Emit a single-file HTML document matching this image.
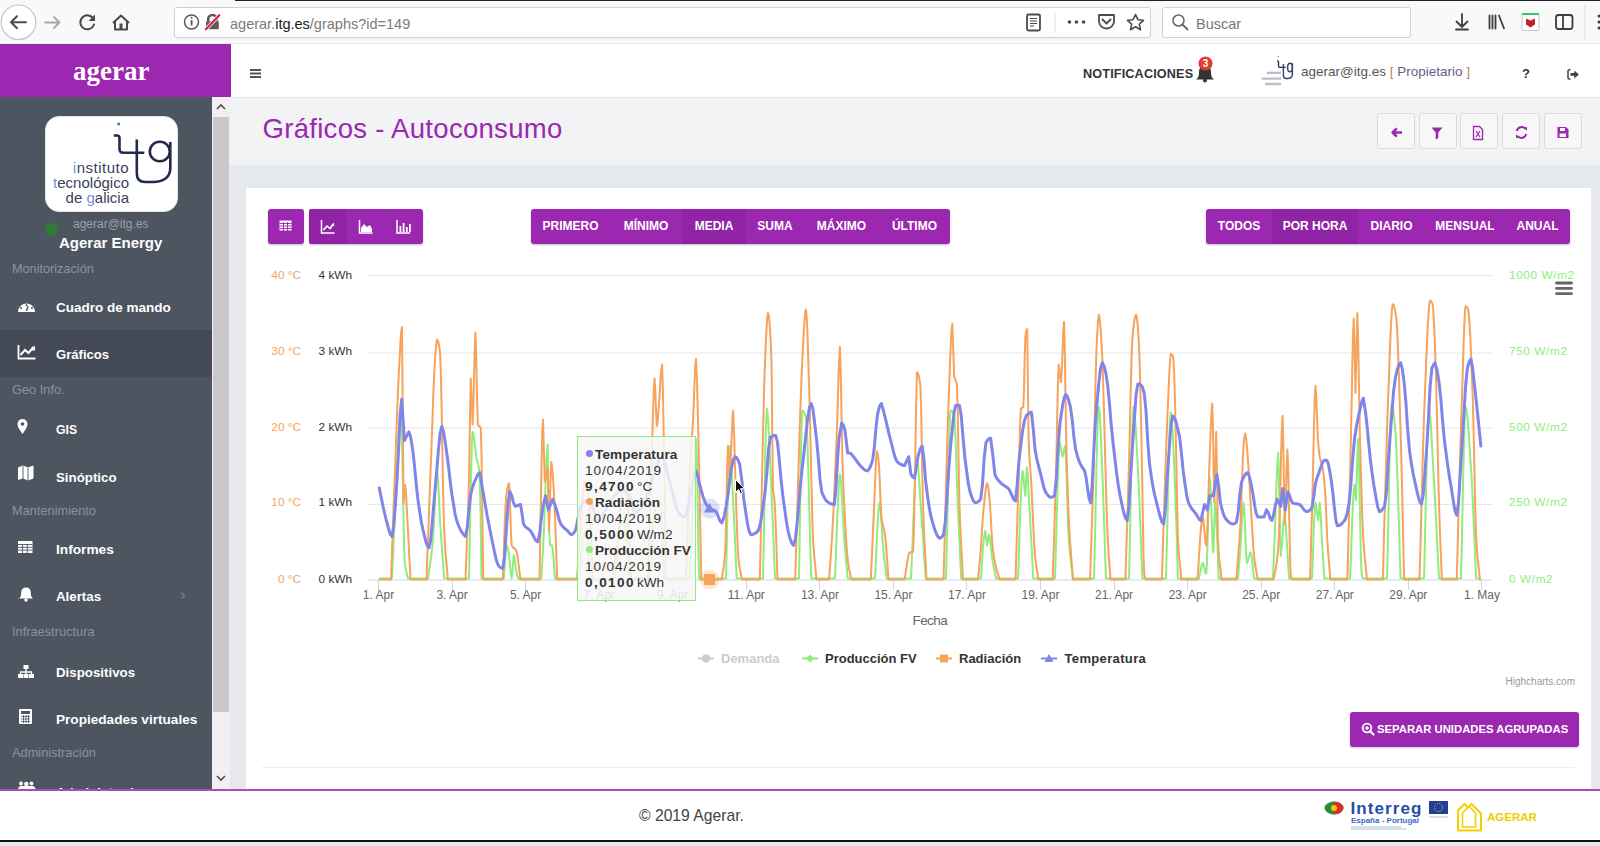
<!DOCTYPE html>
<html><head><meta charset="utf-8">
<style>
*{box-sizing:border-box;margin:0;padding:0}
html,body{width:1600px;height:846px;overflow:hidden;background:#fff;font-family:"Liberation Sans",sans-serif}
.a{position:absolute}
.t{position:absolute;white-space:nowrap;line-height:1}
#chrome{left:0;top:0;width:1600px;height:44px;background:#f9f9fa;border-bottom:1px solid #ececee}
#topline{left:235px;top:0;width:1365px;height:1px;background:#1f1f3a}
.url{left:174px;top:7px;width:977px;height:31px;background:#fff;border:1px solid #d2d2d6;border-radius:3px;box-shadow:0 1px 1px rgba(0,0,0,.05)}
.search{left:1162px;top:7px;width:249px;height:31px;background:#fff;border:1px solid #d2d2d6;border-radius:3px}
#hdrL{left:0;top:44px;width:231px;height:53px;background:#9c27b0}
#hdrR{left:231px;top:44px;width:1369px;height:54px;background:#fff;border-bottom:1px solid #e3e6ea}
#side{left:0;top:97px;width:212px;height:692px;background:#4d5561}
#sbar{left:212px;top:97px;width:18px;height:692px;background:#f0f0f0}
#thumb{left:213px;top:117px;width:16px;height:595px;background:#c9c9c9}
#content{left:230px;top:98px;width:1370px;height:691px;background:#e5e9ed}
#phead{left:230px;top:98px;width:1370px;height:67px;background:#f2f3f5}
#card{left:246px;top:188px;width:1345px;height:620px;background:#fff}
#footer{left:0;top:789px;width:1600px;height:51px;background:#fff;border-top:2px solid #a64dbb}
#botline{left:0;top:840px;width:1600px;height:2px;background:#111}
#botgray{left:0;top:842px;width:1600px;height:4px;background:#e8e8e8}
.bg{position:absolute;background:#9c27b0;border-radius:3px;box-shadow:0 1px 2px rgba(0,0,0,.25)}
.bt{position:absolute;top:0;height:35px;color:#fff;font-weight:bold;font-size:12px;line-height:35px;text-align:center;white-space:nowrap}
.act{background:#9124a6}
.si{position:absolute;left:56px;color:#fff;font-weight:bold;font-size:13.3px;white-space:nowrap;line-height:1}
.ss{position:absolute;left:12px;color:#8793a5;font-size:12.8px;white-space:nowrap;line-height:1}
.hb{position:absolute;top:113px;width:38px;height:36px;background:#f7f7f7;border:1px solid #dcdcdc;border-radius:3px}
</style></head><body>
<div class="a" id="chrome"></div>
<div class="a" id="topline"></div>
<div class="a url"></div>
<div class="a search"></div>

<!-- browser icons -->
<svg class="a" style="left:0;top:0" width="1600" height="44">
  <circle cx="18.5" cy="22.3" r="17.3" fill="#fff" stroke="#c4c4c8" stroke-width="1.2"/>
  <g stroke="#4a4a4f" stroke-width="2" fill="none" stroke-linecap="round" stroke-linejoin="round">
    <path d="M11 22.3h15M17 16.3l-6 6 6 6"/>
  </g>
  <g stroke="#a8a8ab" stroke-width="1.8" fill="none" stroke-linecap="round" stroke-linejoin="round">
    <path d="M45 22.5h14M54 17l5.5 5.5-5.5 5.5"/>
  </g>
  <g stroke="#4a4a4f" stroke-width="2" fill="none" stroke-linecap="round">
    <path d="M93.5 19a7 7 0 1 0 0.5 5.5"/>
  </g>
  <path d="M95 14.5v6.5h-6.5z" fill="#4a4a4f"/>
  <path d="M113 23l8-7.5 8 7.5M115 21.5v8h12v-8" stroke="#4a4a4f" stroke-width="2" fill="none" stroke-linejoin="round"/>
  <rect x="119.5" y="23.5" width="3" height="6" fill="#4a4a4f"/>
  <!-- info -->
  <circle cx="191.5" cy="22" r="7" fill="none" stroke="#5a5a5e" stroke-width="1.5"/>
  <rect x="190.7" y="20" width="1.8" height="5.5" fill="#5a5a5e"/><circle cx="191.6" cy="17.8" r="1" fill="#5a5a5e"/>
  <!-- lock -->
  <path d="M208.2 21.5v-2.2a4.3 4.3 0 0 1 8.6 0v2.2" stroke="#5a5a5e" stroke-width="2.6" fill="none"/>
  <rect x="206" y="21.2" width="12.8" height="8" rx="1.2" fill="#5a5a5e"/>
  <path d="M205.8 29.2l13.5-14" stroke="#fff" stroke-width="3.6" stroke-linecap="round"/>
  <path d="M205.8 29.2l13.5-14" stroke="#e2203e" stroke-width="2.2" stroke-linecap="round"/>
  <!-- reader -->
  <rect x="1027" y="14.5" width="13" height="16" rx="1.5" fill="none" stroke="#4a4a4f" stroke-width="1.8"/>
  <path d="M1030 18.5h7M1030 21h7M1030 23.5h7M1030 26h4" stroke="#4a4a4f" stroke-width="1"/>
  <rect x="1054.5" y="12" width="1" height="21" fill="#e0e0e2"/>
  <circle cx="1069.5" cy="22" r="1.8" fill="#4a4a4f"/><circle cx="1076.5" cy="22" r="1.8" fill="#4a4a4f"/><circle cx="1083.5" cy="22" r="1.8" fill="#4a4a4f"/>
  <path d="M1099 15h15v6a7.5 7.5 0 0 1-15 0z" fill="none" stroke="#4a4a4f" stroke-width="1.8" stroke-linejoin="round"/>
  <path d="M1102.5 19.5l4 4 4-4" fill="none" stroke="#4a4a4f" stroke-width="1.8" stroke-linecap="round"/>
  <path d="M1135.5 14.5l2.4 5.2 5.6.6-4.2 3.8 1.2 5.6-5-2.9-5 2.9 1.2-5.6-4.2-3.8 5.6-.6z" fill="none" stroke="#4a4a4f" stroke-width="1.6" stroke-linejoin="round"/>
  <!-- search icon -->
  <circle cx="1178.5" cy="20.5" r="5.5" fill="none" stroke="#6a6a6e" stroke-width="1.6"/>
  <path d="M1182.5 24.5l5 5" stroke="#6a6a6e" stroke-width="1.8" stroke-linecap="round"/>
  <!-- download -->
  <path d="M1462 14v13M1456.5 21.5l5.5 5.5 5.5-5.5M1456 29.5h12" stroke="#3d3d42" stroke-width="1.8" fill="none" stroke-linecap="round"/>
  <!-- library -->
  <path d="M1489.5 15.5v13M1492.5 15.5v13M1495.5 15.5v13M1499 15.5l5 13" stroke="#3d3d42" stroke-width="1.8" stroke-linecap="round"/>
  <!-- mcafee -->
  <rect x="1522" y="13.5" width="17" height="17" rx="1" fill="#fff" stroke="#c8c8c8"/>
  <rect x="1522" y="13" width="17" height="2" fill="#3ac46b"/>
  <path d="M1526 18.5l4.5 2 4.5-2v6l-4.5 3-4.5-3z" fill="#c8202f"/>
  <!-- sidebar -->
  <rect x="1556" y="15" width="16.5" height="14" rx="2.5" fill="none" stroke="#3d3d42" stroke-width="1.8"/>
  <path d="M1563 15v14" stroke="#3d3d42" stroke-width="1.8"/>
  <rect x="1584.5" y="5" width="1" height="34" fill="#e0e0e2"/>
  <circle cx="1599" cy="16" r="1.5" fill="#3d3d42"/><circle cx="1599" cy="22" r="1.5" fill="#3d3d42"/><circle cx="1599" cy="28" r="1.5" fill="#3d3d42"/>
</svg>
<div class="t" style="left:230px;top:16.5px;font-size:14.5px;color:#7a7a7e">agerar.<span style="color:#1a1a1e">itg.es</span>/graphs?id=149</div>
<div class="t" style="left:1196px;top:17px;font-size:14.5px;color:#77777b">Buscar</div>

<div class="a" id="hdrL"></div>
<div class="t" style="left:73px;top:57.7px;font-family:'Liberation Serif',serif;font-weight:bold;font-size:27px;color:#fff">agerar</div>
<div class="a" id="hdrR"></div>
<svg class="a" style="left:250px;top:68px" width="12" height="11"><rect y="1" width="11" height="2" fill="#555"/><rect y="4.5" width="11" height="2" fill="#555"/><rect y="8" width="11" height="2" fill="#555"/></svg>

<!-- header right -->
<div class="t" style="left:1083px;top:68px;font-size:12.65px;letter-spacing:0.15px;font-weight:bold;color:#333">NOTIFICACIONES</div>
<svg class="a" style="left:1194px;top:55px" width="22" height="28">
  <path d="M2 24.5c2-1.5 3-3 3-7.5 0-4 2.5-6.5 6-6.5s6 2.5 6 6.5c0 4.5 1 6 3 7.5z" fill="#333"/>
  <circle cx="11" cy="25.5" r="2" fill="#333"/>
  <circle cx="11.5" cy="8.5" r="7" fill="#e53935"/>
  <text x="11.5" y="12.2" font-size="10" font-weight="bold" fill="#fff" text-anchor="middle" font-family="Liberation Sans">3</text>
</svg>
<svg class="a" style="left:1255px;top:52px" width="45" height="40">
  <rect x="22.7" y="4" width="1" height="1" fill="#4a5a90"/>
  <path d="M22 8.9h0.8c0.5 0 0.7 0.3 0.7 0.8v4.6c0 0.7 0.4 1.1 1.1 1.1h6.1" stroke="#2b2f5a" stroke-width="1.4" fill="none"/>
  <path d="M28.4 12v11.5c0 2 1 3 3 3h1.5c2.8 0 4.5-1.8 4.5-4.5V11.3" stroke="#3a3f6a" stroke-width="1.4" fill="none"/>
  <ellipse cx="35" cy="15.5" rx="2.4" ry="4.3" stroke="#3a3f6a" stroke-width="1.4" fill="none"/>
  <path d="M12 20.8h14M6.6 26.6h19.4M10.2 32h15.8" stroke="#8f92a8" stroke-width="2.3" opacity=".6"/>
</svg>
<div class="t" style="left:1301px;top:65px;font-size:13.5px;color:#555">agerar@itg.es <span style="color:#b08a4a">[</span> <span style="color:#6a5a8a">Propietario</span> <span style="color:#b08a4a">]</span></div>
<div class="t" style="left:1522px;top:67px;font-size:13px;font-weight:bold;color:#333">?</div>
<svg class="a" style="left:1565px;top:66px" width="16" height="14">
  <path d="M5.5 3.8H4.2c-.8 0-1.2.5-1.2 1.2v6.8c0 .7.4 1.2 1.2 1.2h1.3" stroke="#444" stroke-width="1.5" fill="none"/>
  <path d="M5.5 7h3.8V4.4l4.6 4-4.6 4V9.8H5.5z" fill="#444"/>
</svg>

<div class="a" id="content"></div>
<div class="a" id="phead"></div>
<div class="t" style="left:262.5px;top:115px;font-size:27.5px;letter-spacing:0.3px;color:#9c27b0">Gráficos - Autoconsumo</div>
<div class="hb" style="left:1377px"></div>
<div class="hb" style="left:1419px"></div>
<div class="hb" style="left:1460px"></div>
<div class="hb" style="left:1502px"></div>
<div class="hb" style="left:1544px"></div>
<svg class="a" style="left:1377px;top:113px" width="206" height="36">
  <path d="M16 19.5h9M19.8 15.3l-4.2 4.2 4.2 4.2" stroke="#9c27b0" stroke-width="2.5" fill="none" stroke-linejoin="round"/>
  <path d="M54.5 14.5h11l-4.2 5v5.5l-2.6 1.5v-7z" fill="#9c27b0"/>
  <path d="M96.5 13.5h6l3 3v10h-9z" stroke="#9c27b0" stroke-width="1.3" fill="none"/>
  <path d="M99 18l4 6M103 18l-4 6" stroke="#9c27b0" stroke-width="1.2"/>
  <path d="M139.8 18a5 5 0 0 1 8.6-2.2M149.2 21a5 5 0 0 1-8.6 2.2" stroke="#9c27b0" stroke-width="2" fill="none"/>
  <path d="M146.5 14.5l3.5-0.5 0 3.8zM142.5 24.5l-3.5 0.5 0-3.8z" fill="#9c27b0"/>
  <path d="M180.5 14h8.5l2.5 2.5v8.5h-11z" fill="#9c27b0"/>
  <rect x="183" y="15" width="5" height="3" fill="#f7f7f7"/><rect x="182.5" y="20.5" width="6.5" height="3.5" fill="#f7f7f7"/>
</svg>

<div class="a" id="card"></div>
<!-- card buttons -->
<div class="bg" style="left:268px;top:209px;width:36px;height:35px"></div>
<svg class="a" style="left:279px;top:220px" width="14" height="12"><rect x=".5" y=".5" width="12" height="10" fill="#fff"/><path d="M0.5 3.5h12M.5 6h12M.5 8.5h12M4.5 2v9M8.5 2v9" stroke="#9c27b0" stroke-width=".9"/></svg>
<div class="bg" style="left:309px;top:209px;width:114px;height:35px;overflow:hidden"><div class="a act" style="left:0;top:0;width:38px;height:35px"></div></div>
<svg class="a" style="left:309px;top:209px" width="114" height="35">
  <path d="M12.5 11v13h13" stroke="#fff" stroke-width="1.5" fill="none"/>
  <path d="M14.5 21l3.5-4 3 2.5 3.5-4.5" stroke="#fff" stroke-width="1.6" fill="none"/>
  <path d="M25 13.5v3.5h-3.5z" fill="#fff"/>
  <path d="M50.5 11v13h13" stroke="#fff" stroke-width="1.5" fill="none"/>
  <path d="M52 23v-4l3-4 3 3 3-2 2 4v3z" fill="#fff"/>
  <path d="M88 11v13h13" stroke="#fff" stroke-width="1.5" fill="none"/>
  <path d="M90.5 17h1.8v6h-1.8zM93.7 14h1.8v9h-1.8zM96.9 18h1.8v5h-1.8zM100 15h1.8v8H100z" fill="#fff"/>
</svg>
<div class="bg" style="left:531px;top:209px;width:419px;height:35px">
  <div class="bt" style="left:0;width:79px">PRIMERO</div>
  <div class="bt" style="left:79px;width:72px">MÍNIMO</div>
  <div class="bt act" style="left:151px;width:64px">MEDIA</div>
  <div class="bt" style="left:215px;width:58px">SUMA</div>
  <div class="bt" style="left:273px;width:75px">MÁXIMO</div>
  <div class="bt" style="left:348px;width:71px">ÚLTIMO</div>
</div>
<div class="bg" style="left:1206px;top:209px;width:364px;height:35px">
  <div class="bt" style="left:0;width:66px">TODOS</div>
  <div class="bt act" style="left:66px;width:86px">POR HORA</div>
  <div class="bt" style="left:152px;width:67px">DIARIO</div>
  <div class="bt" style="left:219px;width:80px">MENSUAL</div>
  <div class="bt" style="left:299px;width:65px">ANUAL</div>
</div>
<!-- CHART -->
<svg class="a" style="left:0;top:0" width="1600" height="790" font-family="Liberation Sans">
  <g stroke="#e6e6e6" stroke-width="1">
    <path d="M368 275.5H1492M368 353H1492M368 428H1492M368 504.5H1492"/>
  </g>
  <path d="M368 580H1492" stroke="#ccd6eb" stroke-width="1"/>
  <g stroke="#ccd6eb" stroke-width="1">
    <path d="M378.5 580V590M452.5 580V590M525.5 580V590M599.5 580V590M672.5 580V590M746.5 580V590M819.5 580V590M893.5 580V590M966.5 580V590M1040.5 580V590M1114.5 580V590M1187.5 580V590M1261.5 580V590M1334.5 580V590M1408.5 580V590M1481.5 580V590"/>
  </g>
  <g font-size="11.8" fill="#f7a35c" text-anchor="end">
    <text x="301" y="279">40 °C</text><text x="301" y="355">30 °C</text><text x="301" y="431">20 °C</text><text x="301" y="506.3">10 °C</text><text x="301" y="582.5">0 °C</text>
  </g>
  <g font-size="11.8" fill="#333" text-anchor="end">
    <text x="352" y="279">4 kWh</text><text x="352" y="355">3 kWh</text><text x="352" y="431">2 kWh</text><text x="352" y="506.3">1 kWh</text><text x="352" y="582.5">0 kWh</text>
  </g>
  <g font-size="11.8" fill="#90ed7d" text-anchor="start" letter-spacing="0.6">
    <text x="1509" y="279">1000 W/m2</text><text x="1509" y="355">750 W/m2</text><text x="1509" y="431">500 W/m2</text><text x="1509" y="506.3">250 W/m2</text><text x="1509" y="582.5">0 W/m2</text>
  </g>
  <g font-size="12" fill="#666" text-anchor="middle">
    <text x="378.5" y="599">1. Apr</text><text x="452.1" y="599">3. Apr</text><text x="525.6" y="599">5. Apr</text><text x="599.2" y="599">7. Apr</text><text x="672.7" y="599">9. Apr</text><text x="746.3" y="599">11. Apr</text><text x="819.9" y="599">13. Apr</text><text x="893.4" y="599">15. Apr</text><text x="967.0" y="599">17. Apr</text><text x="1040.5" y="599">19. Apr</text><text x="1114.1" y="599">21. Apr</text><text x="1187.7" y="599">23. Apr</text><text x="1261.2" y="599">25. Apr</text><text x="1334.8" y="599">27. Apr</text><text x="1408.3" y="599">29. Apr</text><text x="1481.9" y="599">1. May</text>
  </g>
  <text x="929.8" y="624.5" font-size="13.5" letter-spacing="-0.6" fill="#666" text-anchor="middle">Fecha</text>
  <path d="M1556.5 283h15M1556.5 288.3h15M1556.5 293.6h15" stroke="#666" stroke-width="2.8" stroke-linecap="round"/>
  <path d="M379.0,578.5 L392.0,578.5 L392.7,562.7 L393.4,546.4 L394.1,530.0 L394.9,513.9 L395.6,498.3 L396.3,483.5 L397.0,470.0 L397.7,455.9 L398.4,441.0 L399.2,427.5 L399.9,417.8 L400.6,414.0 L402.0,440.0 L402.8,478.6 L403.7,529.5 L404.5,559.5 L405.2,565.4 L405.9,569.5 L406.6,572.5 L407.3,575.2 L408.0,578.5 L428.0,578.5 L428.7,573.3 L429.4,568.4 L430.1,563.6 L430.9,558.6 L431.6,553.2 L432.3,547.1 L433.0,540.0 L433.8,527.2 L434.6,509.4 L435.5,491.0 L436.3,476.7 L437.1,470.9 L437.8,476.5 L438.6,489.9 L439.3,506.1 L440.0,520.0 L440.8,532.5 L441.7,544.3 L442.5,555.7 L443.4,567.0 L444.2,578.5 L469.0,578.5 L469.7,544.5 L470.4,505.7 L471.2,469.4 L471.9,442.4 L472.6,431.8 L473.3,433.7 L474.0,438.5 L474.8,444.9 L475.5,451.4 L476.2,456.7 L476.9,460.0 L477.6,462.4 L478.3,465.0 L479.0,468.6 L479.7,474.4 L480.6,515.7 L481.5,578.5 L504.0,578.5 L504.8,564.9 L505.5,551.2 L506.3,545.0 L507.0,545.9 L507.7,548.2 L508.4,551.4 L509.1,555.0 L509.9,563.0 L510.8,573.4 L511.6,578.5 L512.4,572.4 L513.2,561.1 L514.0,555.0 L515.0,561.1 L516.0,570.0 L517.0,574.5 L518.0,578.5 L541.3,578.5 L542.0,566.0 L542.8,553.5 L543.5,540.0 L544.2,523.4 L544.9,503.0 L545.6,481.9 L546.3,463.0 L547.0,449.5 L547.7,444.3 L548.4,500.0 L549.2,531.3 L550.0,545.0 L551.0,545.2 L551.9,545.3 L552.7,549.1 L553.5,557.9 L554.2,568.7 L555.0,578.5 L579.0,578.5 L579.8,570.2 L580.6,561.3 L581.4,552.6 L582.2,545.3 L583.0,540.0 L583.8,536.4 L584.5,533.2 L585.2,530.9 L586.0,530.0 L586.8,533.5 L587.6,542.4 L588.4,554.4 L589.2,567.2 L590.0,578.5 L615.0,578.5 L615.7,571.1 L616.4,562.9 L617.1,554.7 L617.9,546.7 L618.6,539.6 L619.3,533.9 L620.0,530.0 L620.8,527.0 L621.6,524.2 L622.4,522.0 L623.2,520.5 L624.0,520.0 L624.7,522.2 L625.4,528.2 L626.1,536.9 L626.9,547.3 L627.6,558.4 L628.3,569.1 L629.0,578.5 L650.0,578.5 L650.7,567.8 L651.4,556.0 L652.1,543.8 L652.9,532.2 L653.6,522.1 L654.3,514.4 L655.0,510.0 L655.7,507.6 L656.4,505.5 L657.1,503.6 L657.9,502.1 L658.6,501.0 L659.3,500.2 L660.0,500.0 L660.8,505.7 L661.6,520.1 L662.4,539.6 L663.2,560.3 L664.0,578.5 L690.0,578.5 L690.8,555.8 L691.6,532.0 L692.4,508.8 L693.2,487.6 L694.0,470.0 L695.0,449.7 L696.0,439.0 L696.8,454.3 L697.5,491.3 L698.2,537.1 L699.0,578.5 L726.0,578.5 L726.7,547.8 L727.4,512.8 L728.2,479.9 L728.9,455.5 L729.6,446.0 L730.3,449.8 L731.0,459.7 L731.8,473.3 L732.5,488.5 L733.2,502.8 L733.9,516.4 L734.6,531.4 L735.3,547.1 L736.0,563.0 L736.7,578.5 L763.0,578.5 L763.8,539.1 L764.6,494.3 L765.3,452.2 L766.1,421.0 L766.9,408.8 L767.6,412.7 L768.3,422.8 L769.0,436.8 L769.7,452.4 L770.4,467.3 L771.2,483.4 L771.9,501.3 L772.7,520.3 L773.5,539.9 L774.2,559.5 L775.0,578.5 L799.0,578.5 L799.8,528.7 L800.6,473.6 L801.5,429.0 L802.3,410.6 L803.0,410.9 L803.7,411.8 L804.5,413.1 L805.2,414.9 L805.9,417.0 L806.7,424.9 L807.4,442.1 L808.2,466.0 L808.9,494.1 L809.7,523.9 L810.4,552.9 L811.2,578.5 L835.0,578.5 L835.8,558.7 L836.6,536.1 L837.5,513.4 L838.3,493.7 L839.1,479.7 L839.9,474.4 L840.6,477.8 L841.3,486.8 L842.0,499.2 L842.8,513.3 L843.5,526.9 L844.2,538.0 L844.9,546.7 L845.6,554.9 L846.3,562.8 L847.0,570.6 L847.7,578.5 L875.0,578.5 L875.8,564.1 L876.5,547.7 L877.3,531.2 L878.1,516.8 L878.8,506.7 L879.6,502.8 L880.3,506.4 L881.0,515.5 L881.8,527.4 L882.5,539.4 L883.2,548.9 L883.9,555.6 L884.6,561.6 L885.3,567.2 L886.0,572.8 L886.7,578.5 L911.0,578.5 L911.7,562.1 L912.5,543.4 L913.2,523.7 L914.0,504.6 L914.7,487.2 L915.4,473.1 L916.2,463.7 L916.9,460.2 L917.7,463.0 L918.4,470.4 L919.2,480.9 L920.0,493.1 L920.7,505.7 L921.5,517.0 L922.2,526.7 L922.9,536.7 L923.6,547.1 L924.3,557.6 L925.0,568.1 L925.7,578.5 L946.0,578.5 L946.8,546.6 L947.5,510.1 L948.3,473.6 L949.1,441.7 L949.8,419.2 L950.6,410.6 L951.3,410.7 L952.0,411.2 L952.7,411.9 L953.4,412.9 L954.1,414.1 L954.8,421.6 L955.5,438.4 L956.3,460.3 L957.0,483.2 L957.7,502.8 L958.4,518.6 L959.1,533.8 L959.8,548.7 L960.5,563.5 L961.2,578.5 L981.0,578.5 L981.8,565.1 L982.7,551.7 L983.5,541.8 L984.4,534.5 L985.3,531.0 L986.2,538.1 L987.1,545.3 L988.0,540.0 L988.9,534.7 L989.6,536.6 L990.3,541.4 L991.0,547.7 L991.7,554.2 L992.4,559.5 L993.1,563.7 L993.8,567.5 L994.6,571.2 L995.3,574.8 L996.0,578.5 L1018.0,578.5 L1018.8,558.1 L1019.5,534.7 L1020.3,511.2 L1021.1,490.8 L1021.8,476.4 L1022.6,470.9 L1023.3,474.8 L1024.0,483.3 L1024.7,491.8 L1025.4,495.7 L1026.8,467.3 L1027.7,474.9 L1028.7,491.9 L1029.6,509.9 L1030.3,522.6 L1031.0,536.2 L1031.8,550.3 L1032.5,564.5 L1033.2,578.5 L1055.0,578.5 L1055.8,552.7 L1056.6,523.1 L1057.4,493.5 L1058.2,467.7 L1059.0,449.4 L1059.8,442.5 L1060.7,446.2 L1061.7,453.0 L1062.6,456.7 L1063.4,453.9 L1064.3,448.8 L1065.1,446.0 L1065.8,454.0 L1066.5,473.6 L1067.3,498.4 L1068.0,522.1 L1068.7,538.2 L1069.4,547.1 L1070.1,554.5 L1070.8,560.7 L1071.5,566.5 L1072.2,572.2 L1072.9,578.5 L1094.0,578.5 L1094.8,545.9 L1095.6,508.6 L1096.4,471.3 L1097.2,438.8 L1098.0,415.7 L1098.8,407.0 L1099.5,411.1 L1100.2,421.9 L1100.9,437.0 L1101.6,454.1 L1102.3,470.9 L1103.0,489.1 L1103.7,510.2 L1104.5,533.0 L1105.2,556.1 L1105.9,578.5 L1129.0,578.5 L1129.8,545.9 L1130.5,508.6 L1131.2,471.3 L1132.0,438.8 L1132.8,415.7 L1133.5,407.0 L1134.2,409.7 L1134.9,417.0 L1135.7,427.6 L1136.4,440.4 L1137.1,454.0 L1137.8,467.3 L1138.6,482.4 L1139.3,500.0 L1140.1,519.2 L1140.9,539.2 L1141.6,559.3 L1142.4,578.5 L1166.0,578.5 L1166.8,547.0 L1167.6,510.8 L1168.4,474.6 L1169.2,443.1 L1170.0,420.8 L1170.8,412.3 L1171.5,415.7 L1172.2,424.7 L1172.9,437.5 L1173.6,452.3 L1174.3,467.3 L1175.0,484.9 L1175.7,506.5 L1176.5,530.5 L1177.2,555.1 L1177.9,578.5 L1199.0,578.5 L1199.7,574.9 L1200.5,570.8 L1201.2,567.0 L1202.0,564.1 L1202.7,563.0 L1203.4,564.1 L1204.1,566.8 L1204.8,569.9 L1205.5,572.6 L1206.2,573.7 L1206.9,563.7 L1207.6,540.0 L1208.4,511.7 L1209.1,488.0 L1209.8,478.0 L1210.5,485.7 L1211.2,504.2 L1211.9,526.2 L1212.6,544.7 L1213.3,552.4 L1214.2,527.6 L1215.1,502.8 L1215.8,508.3 L1216.5,522.2 L1217.3,541.0 L1218.0,560.9 L1218.7,578.5 L1238.0,578.5 L1238.9,567.6 L1239.7,556.7 L1240.6,545.3 L1241.3,533.1 L1242.0,519.1 L1242.8,507.6 L1243.5,502.8 L1244.2,509.1 L1244.9,524.0 L1245.6,541.8 L1246.3,556.7 L1247.0,563.0 L1247.7,561.9 L1248.4,559.3 L1249.2,556.1 L1249.9,553.5 L1250.6,552.4 L1251.3,554.3 L1252.0,559.1 L1252.7,565.6 L1253.4,572.4 L1254.1,578.5 L1273.0,578.5 L1273.8,557.7 L1274.6,537.0 L1275.4,517.0 L1276.3,490.4 L1277.3,464.6 L1278.2,453.0 L1279.0,479.7 L1279.9,529.3 L1280.7,556.0 L1282.0,545.0 L1282.8,533.8 L1283.5,521.1 L1284.3,515.0 L1285.2,520.1 L1286.1,531.8 L1287.0,545.0 L1288.0,560.9 L1289.0,578.5 L1312.0,578.5 L1312.7,560.9 L1313.4,541.0 L1314.1,522.2 L1314.8,508.3 L1315.5,502.8 L1316.4,507.4 L1317.4,515.9 L1318.3,520.5 L1319.0,511.6 L1319.7,502.8 L1320.8,516.2 L1321.8,538.2 L1322.6,551.8 L1323.5,565.1 L1324.3,578.5 L1350.0,578.5 L1350.8,560.8 L1351.5,540.4 L1352.2,520.1 L1353.0,502.3 L1353.8,489.8 L1354.5,485.0 L1355.2,492.5 L1356.0,500.0 L1357.0,469.5 L1358.0,439.0 L1358.7,452.4 L1359.4,484.5 L1360.2,523.4 L1360.9,557.1 L1361.6,573.7 L1362.3,576.5 L1363.0,578.5 L1387.0,578.5 L1387.8,545.3 L1388.6,507.2 L1389.3,469.1 L1390.1,435.9 L1390.9,412.4 L1391.7,403.5 L1392.4,404.9 L1393.1,408.6 L1393.8,414.1 L1394.5,420.9 L1395.2,428.3 L1396.0,440.1 L1396.7,457.8 L1397.5,479.8 L1398.3,504.5 L1399.1,530.2 L1399.8,555.4 L1400.6,578.5 L1424.0,578.5 L1424.7,551.0 L1425.4,519.5 L1426.1,487.0 L1426.8,456.5 L1427.5,431.0 L1428.2,413.5 L1428.9,407.0 L1429.6,409.9 L1430.3,417.5 L1431.1,428.5 L1431.8,441.4 L1432.5,454.8 L1433.2,467.3 L1433.9,479.5 L1434.7,492.6 L1435.4,506.4 L1436.1,520.7 L1436.8,535.2 L1437.5,549.9 L1438.3,564.4 L1439.0,578.5 L1461.0,578.5 L1461.8,545.9 L1462.5,508.6 L1463.3,471.3 L1464.1,438.8 L1464.8,415.7 L1465.6,407.0 L1466.4,409.0 L1467.1,414.4 L1467.9,422.5 L1468.6,432.6 L1469.4,443.9 L1470.1,455.8 L1470.9,467.3 L1471.7,479.7 L1472.4,494.3 L1473.2,510.3 L1473.9,527.4 L1474.7,544.8 L1475.4,562.0 L1476.2,578.5 L1481.0,578.5" fill="none" stroke="#90ed7d" stroke-width="2" stroke-linejoin="round"/>
  <path d="M379.0,579.5 L391.0,579.5 L391.8,557.4 L392.6,535.2 L393.4,513.1 L394.2,491.3 L395.0,470.0 L395.8,448.5 L396.6,426.6 L397.4,405.5 L398.2,386.2 L399.0,370.0 L399.8,355.7 L400.5,341.9 L401.2,331.4 L402.0,327.2 L402.8,415.0 L403.5,502.8 L404.4,493.9 L405.2,485.0 L406.1,495.2 L407.0,513.0 L407.7,525.4 L408.4,538.6 L409.1,552.2 L409.8,566.0 L410.5,579.5 L426.5,579.5 L427.2,559.5 L428.0,539.4 L428.8,519.3 L429.5,499.3 L430.2,479.5 L431.0,460.0 L431.8,438.1 L432.6,415.1 L433.4,393.0 L434.2,374.0 L435.0,360.0 L435.7,350.5 L436.4,342.8 L437.1,339.6 L437.8,340.5 L438.6,343.1 L439.3,347.0 L440.0,352.0 L440.8,371.9 L441.7,411.3 L442.5,458.8 L443.4,502.5 L444.2,531.0 L444.9,543.8 L445.6,553.9 L446.4,562.4 L447.1,570.6 L447.8,579.5 L465.5,579.5 L466.2,560.8 L466.9,543.3 L467.6,525.2 L468.3,504.7 L469.0,480.0 L469.9,420.5 L470.8,378.7 L471.7,401.8 L472.6,424.8 L473.5,400.9 L474.5,356.5 L475.4,332.6 L476.2,356.1 L477.1,400.1 L477.9,424.8 L478.6,425.9 L479.4,426.4 L480.1,426.9 L480.8,428.0 L481.6,456.9 L482.4,518.2 L483.2,579.5 L502.8,579.5 L503.5,560.9 L504.2,540.4 L504.9,520.8 L505.6,505.0 L506.3,495.7 L507.0,490.9 L507.7,486.9 L508.4,484.3 L509.1,483.3 L509.9,498.9 L510.8,528.3 L511.6,545.3 L512.4,546.8 L513.1,547.6 L513.9,548.2 L514.7,548.7 L515.4,549.4 L516.2,550.6 L516.9,553.1 L517.6,557.2 L518.4,562.5 L519.1,568.4 L519.8,574.2 L520.5,579.5 L539.5,579.5 L540.2,542.4 L540.9,500.1 L541.6,460.4 L542.3,430.9 L543.0,419.4 L543.9,450.4 L544.8,481.5 L545.5,479.3 L546.2,474.4 L547.0,469.5 L547.7,467.3 L549.0,531.0 L549.7,513.1 L550.5,479.9 L551.2,462.0 L552.0,466.2 L552.9,476.2 L553.7,488.6 L554.4,501.8 L555.1,519.3 L555.8,539.4 L556.5,560.1 L557.2,579.5 L577.0,579.5 L577.8,567.2 L578.6,554.6 L579.4,542.1 L580.2,530.4 L581.0,520.0 L581.8,509.7 L582.6,499.0 L583.4,489.5 L584.2,482.6 L585.0,480.0 L585.8,481.1 L586.6,484.0 L587.4,488.4 L588.2,493.8 L589.0,500.0 L589.8,509.8 L590.6,525.0 L591.4,543.1 L592.2,562.1 L593.0,579.5 L612.0,579.5 L612.8,574.7 L613.5,570.2 L614.2,565.8 L615.0,561.3 L615.8,556.6 L616.5,551.6 L617.2,546.1 L618.0,540.0 L618.8,530.6 L619.6,518.1 L620.4,505.6 L621.2,495.9 L622.0,492.0 L622.7,492.1 L623.4,492.2 L624.1,492.5 L624.9,493.0 L625.6,493.5 L626.3,494.2 L627.0,495.0 L627.8,501.7 L628.6,517.3 L629.4,538.1 L630.2,560.1 L631.0,579.5 L648.0,579.5 L648.8,553.3 L649.6,526.9 L650.4,500.6 L651.2,474.8 L652.0,450.0 L652.8,420.2 L653.7,391.4 L654.5,378.4 L655.3,390.7 L656.1,413.7 L656.9,426.0 L657.6,421.8 L658.3,412.6 L659.0,403.0 L659.8,392.0 L660.5,379.3 L661.3,368.9 L662.1,364.6 L662.9,389.6 L663.7,435.2 L664.5,479.4 L665.2,529.4 L666.0,579.5 L686.0,579.5 L686.8,556.7 L687.6,533.1 L688.4,509.8 L689.2,488.4 L690.0,470.0 L690.8,456.1 L691.5,444.2 L692.2,432.7 L693.0,420.0 L693.8,402.8 L694.5,382.7 L695.2,366.0 L696.0,359.1 L697.0,380.4 L698.0,420.0 L698.8,454.5 L699.6,494.9 L700.5,537.8 L701.3,579.5 L721.8,579.5 L722.5,574.1 L723.2,569.4 L724.0,564.3 L724.7,557.9 L725.4,548.9 L726.2,516.8 L727.1,470.0 L727.9,446.0 L728.8,460.2 L729.6,474.4 L730.3,467.8 L731.0,451.9 L731.8,433.1 L732.5,417.2 L733.2,410.6 L734.1,432.4 L735.0,467.3 L735.7,488.8 L736.4,511.2 L737.1,532.0 L737.8,548.9 L738.5,559.5 L739.2,565.1 L739.9,569.4 L740.6,572.7 L741.3,575.9 L742.0,579.5 L759.8,579.5 L760.6,546.6 L761.3,511.3 L762.1,475.5 L762.8,440.9 L763.6,409.1 L764.3,381.9 L765.1,361.0 L765.8,344.3 L766.5,328.8 L767.3,317.4 L768.0,313.0 L768.7,315.1 L769.4,321.1 L770.1,330.9 L770.8,344.3 L771.5,361.0 L772.2,428.1 L773.0,490.0 L773.8,495.4 L774.5,500.0 L775.2,512.9 L776.0,533.6 L776.8,557.3 L777.5,579.5 L795.2,579.5 L795.9,556.9 L796.6,533.1 L797.3,508.6 L798.0,483.9 L798.8,459.6 L799.5,436.1 L800.2,414.0 L800.9,393.8 L801.6,376.0 L802.3,361.0 L803.0,347.0 L803.7,333.1 L804.5,321.1 L805.2,312.7 L805.9,309.5 L806.6,315.1 L807.3,329.9 L808.0,350.5 L808.7,373.7 L809.4,396.4 L810.1,423.0 L810.8,455.7 L811.6,489.2 L812.3,518.4 L813.0,538.0 L813.7,549.1 L814.4,557.8 L815.1,565.0 L815.8,571.9 L816.5,579.5 L829.0,579.5 L829.8,569.5 L830.5,559.8 L831.2,549.6 L832.0,538.0 L832.7,525.0 L833.5,510.6 L834.2,494.9 L834.9,478.2 L835.6,460.9 L836.4,443.0 L837.1,424.8 L838.0,394.2 L839.0,361.8 L839.9,346.7 L840.7,370.5 L841.6,419.4 L842.4,460.2 L843.3,484.0 L844.2,502.8 L844.9,516.6 L845.6,529.9 L846.3,542.0 L847.0,552.1 L847.7,559.5 L848.4,564.8 L849.1,568.9 L849.9,572.4 L850.6,575.8 L851.3,579.5 L870.8,579.5 L871.5,564.1 L872.2,548.6 L872.9,533.1 L873.6,517.8 L874.3,502.8 L875.1,481.6 L876.0,460.7 L876.8,451.3 L877.5,453.1 L878.2,457.7 L878.9,463.8 L879.7,479.4 L880.6,501.8 L881.4,517.0 L882.1,521.8 L882.8,525.1 L883.6,527.6 L884.3,530.5 L885.0,534.7 L885.7,541.1 L886.4,549.8 L887.1,559.7 L887.8,569.9 L888.5,579.5 L904.5,579.5 L905.3,575.2 L906.0,570.2 L906.8,565.2 L907.5,560.4 L908.3,556.4 L909.0,553.6 L909.8,552.4 L910.6,552.3 L911.4,552.2 L912.2,552.1 L913.0,552.0 L913.7,538.0 L914.4,506.0 L915.1,470.9 L916.0,411.4 L916.9,372.3 L917.6,372.9 L918.3,374.5 L919.0,377.2 L919.7,381.0 L920.4,385.7 L921.2,413.3 L922.1,462.7 L922.9,502.8 L923.6,522.1 L924.3,538.0 L925.1,551.8 L925.8,565.2 L926.5,579.5 L943.5,579.5 L944.3,552.5 L945.0,524.4 L945.8,496.0 L946.5,468.2 L947.3,441.7 L948.0,417.5 L948.8,396.4 L949.5,377.4 L950.2,358.0 L950.9,340.7 L951.6,328.4 L952.3,323.7 L953.2,347.8 L954.1,375.1 L954.8,378.6 L955.5,380.4 L956.3,382.1 L957.0,385.7 L957.8,413.1 L958.6,462.9 L959.4,502.8 L960.1,522.4 L960.8,538.2 L961.6,552.0 L962.3,565.2 L963.0,579.5 L978.0,579.5 L979.0,569.9 L980.0,559.5 L980.7,550.3 L981.4,539.5 L982.1,528.4 L982.8,518.1 L983.5,509.9 L984.2,502.7 L984.9,495.5 L985.7,489.3 L986.4,484.9 L987.1,483.3 L988.0,486.3 L989.0,493.6 L989.9,502.8 L990.7,515.8 L991.6,532.6 L992.4,545.3 L993.2,551.8 L994.0,557.0 L994.7,561.3 L995.5,565.0 L996.3,568.4 L997.1,571.4 L997.9,574.1 L998.7,576.7 L999.5,579.5 L1015.5,579.5 L1016.2,557.1 L1016.9,534.7 L1017.6,512.3 L1018.3,489.8 L1019.0,467.3 L1019.9,431.1 L1020.8,408.8 L1021.6,408.1 L1022.5,407.7 L1023.3,407.0 L1024.0,389.2 L1024.7,356.4 L1025.4,336.1 L1026.3,331.0 L1027.2,329.0 L1028.6,438.9 L1029.3,455.3 L1030.0,466.0 L1030.7,474.6 L1031.4,485.0 L1032.1,499.5 L1032.8,515.8 L1033.6,532.0 L1034.3,546.1 L1035.0,556.0 L1035.7,562.2 L1036.4,567.1 L1037.1,571.2 L1037.8,575.2 L1038.5,579.5 L1052.7,579.5 L1053.4,557.5 L1054.1,536.0 L1054.8,514.3 L1055.5,491.6 L1056.2,467.3 L1057.0,427.2 L1057.9,384.4 L1058.7,364.5 L1059.4,369.1 L1060.2,377.6 L1060.9,382.2 L1061.7,372.8 L1062.5,352.0 L1063.2,331.3 L1064.0,321.9 L1064.7,345.8 L1065.5,395.7 L1066.2,438.9 L1067.0,470.0 L1067.9,496.4 L1068.7,517.0 L1069.4,530.3 L1070.1,541.5 L1070.8,551.3 L1071.5,560.5 L1072.2,569.7 L1072.9,579.5 L1090.0,579.5 L1090.7,559.1 L1091.4,539.3 L1092.1,519.3 L1092.8,497.9 L1093.5,474.4 L1094.4,433.1 L1095.4,387.1 L1096.3,353.8 L1097.1,335.3 L1098.0,320.7 L1098.8,314.8 L1099.5,317.2 L1100.2,323.6 L1100.9,333.1 L1101.6,344.7 L1102.3,357.4 L1103.1,380.1 L1104.0,411.4 L1104.8,442.5 L1105.5,468.4 L1106.2,495.1 L1107.0,519.5 L1107.7,538.2 L1108.6,554.3 L1109.6,566.9 L1110.5,579.5 L1125.4,579.5 L1126.1,557.3 L1126.8,535.3 L1127.5,513.2 L1128.2,490.7 L1128.9,467.3 L1129.6,439.1 L1130.3,406.9 L1131.1,375.7 L1131.8,350.4 L1132.5,336.1 L1133.2,329.2 L1134.0,323.3 L1134.7,318.8 L1135.5,315.8 L1136.2,314.8 L1137.1,318.9 L1138.0,329.2 L1138.9,343.2 L1139.7,364.6 L1140.5,396.9 L1141.3,431.8 L1142.0,470.1 L1142.8,515.3 L1143.5,554.2 L1144.2,573.7 L1145.5,579.5 L1161.9,579.5 L1162.6,556.7 L1163.3,533.5 L1164.1,510.4 L1164.8,488.2 L1165.5,467.3 L1166.4,441.6 L1167.4,417.4 L1168.3,396.4 L1169.1,377.8 L1170.0,361.1 L1170.8,353.8 L1171.6,354.2 L1172.5,355.5 L1173.3,357.4 L1174.2,374.1 L1175.2,409.7 L1176.1,449.6 L1177.0,498.3 L1177.9,538.2 L1178.6,550.3 L1179.3,559.0 L1180.0,565.9 L1180.7,572.2 L1181.4,579.5 L1197.4,579.5 L1198.2,569.5 L1198.9,558.0 L1199.7,546.2 L1200.4,535.0 L1201.2,525.7 L1201.9,519.4 L1202.7,517.0 L1203.4,519.9 L1204.1,527.0 L1204.8,535.3 L1205.5,542.4 L1206.2,545.3 L1206.9,538.3 L1207.6,520.5 L1208.4,497.1 L1209.1,472.9 L1209.8,453.1 L1210.6,432.0 L1211.5,412.3 L1212.3,403.5 L1213.0,429.2 L1213.7,477.1 L1214.4,502.8 L1215.3,467.3 L1216.2,431.8 L1217.1,480.5 L1217.9,538.2 L1218.6,550.9 L1219.3,559.7 L1220.1,566.3 L1220.8,572.4 L1221.5,579.5 L1236.4,579.5 L1237.2,568.3 L1238.1,557.7 L1238.9,546.8 L1239.8,534.7 L1240.6,520.5 L1241.3,502.8 L1242.0,480.5 L1242.8,459.5 L1243.5,446.0 L1244.3,437.5 L1245.2,433.6 L1246.0,437.4 L1246.9,446.4 L1247.7,456.7 L1248.4,466.5 L1249.2,478.3 L1249.9,490.8 L1250.6,502.8 L1251.3,514.3 L1252.0,526.3 L1252.7,537.9 L1253.4,548.1 L1254.1,556.0 L1254.8,561.9 L1255.5,566.8 L1256.3,571.0 L1257.0,575.1 L1257.7,579.5 L1273.6,579.5 L1274.4,575.0 L1275.3,570.7 L1276.2,565.9 L1277.0,560.0 L1278.0,551.1 L1278.9,538.2 L1279.6,517.8 L1280.4,486.5 L1281.1,453.2 L1281.9,426.7 L1282.6,415.9 L1283.3,443.9 L1284.1,496.0 L1284.8,524.0 L1285.7,504.7 L1286.5,468.9 L1287.4,449.6 L1288.2,469.0 L1288.9,502.8 L1289.8,544.8 L1290.6,573.7 L1291.3,577.2 L1292.0,579.5 L1310.1,579.5 L1310.9,549.1 L1311.8,518.7 L1312.6,488.6 L1313.3,457.9 L1314.0,424.1 L1314.8,396.9 L1315.5,385.7 L1316.3,397.1 L1317.1,420.4 L1317.9,439.0 L1318.8,449.6 L1319.7,456.7 L1320.4,459.9 L1321.2,462.1 L1321.9,464.2 L1322.6,467.3 L1323.3,471.9 L1324.0,478.3 L1324.7,486.2 L1325.4,495.7 L1326.3,516.4 L1327.2,538.2 L1328.0,550.4 L1328.8,560.6 L1329.6,569.8 L1330.4,579.5 L1347.4,579.5 L1348.1,551.5 L1348.8,523.5 L1349.5,495.6 L1350.2,467.4 L1350.9,439.0 L1351.6,403.5 L1352.3,363.9 L1353.1,331.7 L1353.8,318.4 L1354.7,355.6 L1355.5,392.8 L1356.4,352.9 L1357.3,313.0 L1358.1,336.8 L1359.0,387.1 L1359.8,431.8 L1360.5,457.8 L1361.2,482.6 L1361.9,504.9 L1362.6,523.9 L1363.3,538.2 L1364.0,548.9 L1364.7,557.4 L1365.5,564.8 L1366.2,571.8 L1366.9,579.5 L1382.8,579.5 L1383.6,552.5 L1384.3,524.4 L1385.1,496.0 L1385.9,468.2 L1386.7,441.7 L1387.4,417.5 L1388.2,396.4 L1389.0,376.2 L1389.7,355.4 L1390.5,335.9 L1391.3,319.6 L1392.0,308.4 L1392.8,304.2 L1393.5,304.9 L1394.2,306.9 L1394.9,309.9 L1395.6,313.8 L1396.3,318.4 L1397.0,327.0 L1397.7,341.7 L1398.4,361.2 L1399.2,383.7 L1399.9,407.8 L1400.6,431.8 L1401.3,457.1 L1402.0,486.1 L1402.7,517.2 L1403.4,548.9 L1404.1,579.5 L1419.5,579.5 L1420.3,552.3 L1421.0,523.8 L1421.8,495.0 L1422.5,466.9 L1423.3,440.4 L1424.0,416.5 L1424.8,396.4 L1425.6,377.9 L1426.3,359.1 L1427.1,341.1 L1427.8,325.1 L1428.6,312.3 L1429.3,303.7 L1430.1,300.6 L1430.9,301.0 L1431.8,302.3 L1432.6,304.2 L1433.3,310.6 L1434.0,324.1 L1434.8,341.8 L1435.5,361.0 L1436.2,383.8 L1436.9,413.2 L1437.6,445.3 L1438.3,476.4 L1439.0,502.8 L1439.9,530.5 L1440.9,555.0 L1441.8,579.5 L1456.7,579.5 L1457.5,552.8 L1458.2,525.4 L1459.0,497.8 L1459.7,470.6 L1460.5,444.3 L1461.2,419.4 L1462.0,396.4 L1462.7,373.7 L1463.4,349.7 L1464.2,327.9 L1464.9,312.1 L1465.6,306.0 L1466.4,306.5 L1467.3,307.7 L1468.1,309.5 L1468.9,314.4 L1469.6,324.7 L1470.4,339.3 L1471.2,356.8 L1471.9,376.3 L1472.7,396.4 L1473.4,420.9 L1474.1,453.5 L1474.8,488.1 L1475.5,518.4 L1476.2,538.2 L1476.9,549.4 L1477.6,558.1 L1478.4,565.2 L1479.1,572.0 L1479.8,579.5 L1481.0,579.5" fill="none" stroke="#f7a35c" stroke-width="2" stroke-linejoin="round"/>
  <path d="M379.3,487.9 L381.2,497.4 L383.1,506.8 L385.0,515.0 L386.8,522.1 L388.6,529.0 L390.3,534.3 L392.1,536.4 L393.7,526.8 L395.4,504.6 L397.0,480.0 L398.6,449.4 L400.1,415.3 L401.7,399.2 L404.5,440.7 L406.6,436.2 L408.8,431.8 L410.4,436.2 L412.0,445.0 L413.5,456.2 L415.0,471.2 L416.5,486.9 L418.0,500.0 L419.7,511.6 L421.3,521.9 L423.0,530.0 L424.5,536.2 L426.0,541.9 L427.5,546.1 L429.0,547.8 L430.5,541.4 L432.0,526.0 L433.5,507.0 L435.0,490.0 L436.7,471.0 L438.4,450.2 L440.1,433.4 L441.8,426.5 L443.5,431.4 L445.3,442.6 L447.0,455.0 L448.7,467.8 L450.3,482.3 L452.0,495.0 L453.6,505.0 L455.1,514.0 L456.7,520.5 L458.4,525.3 L460.2,529.2 L461.9,532.3 L463.7,534.7 L465.5,536.4 L467.3,527.1 L469.0,508.3 L470.8,493.9 L472.6,487.1 L474.4,482.0 L476.2,478.0 L477.9,474.4 L479.7,472.6 L481.5,483.0 L483.2,492.8 L484.9,502.7 L486.6,512.4 L488.3,521.6 L490.0,530.0 L491.5,537.5 L493.1,545.3 L494.6,552.7 L496.1,559.2 L497.7,564.0 L499.2,566.6 L501.0,567.9 L502.8,568.4 L504.6,556.4 L506.3,529.9 L508.1,503.4 L509.8,491.4 L511.6,495.3 L513.4,502.4 L515.2,506.3 L517.0,505.8 L518.7,505.0 L520.5,504.5 L522.0,513.5 L523.5,524.0 L525.3,526.6 L527.0,528.1 L528.8,529.3 L530.6,531.0 L532.4,533.9 L534.2,537.5 L535.9,540.5 L537.7,541.8 L539.5,534.6 L541.2,519.5 L543.0,506.3 L545.5,495.7 L548.4,509.9 L550.5,504.5 L552.6,499.2 L555.5,506.3 L557.3,512.5 L559.0,519.3 L560.8,524.0 L562.6,526.3 L564.3,528.1 L566.1,529.5 L567.9,531.1 L569.6,533.3 L571.4,534.7 L573.2,533.7 L575.0,531.4 L576.5,526.3 L578.1,517.7 L579.7,509.3 L581.2,504.5 L582.8,502.9 L584.3,501.6 L585.9,500.7 L587.4,500.4 L589.0,501.1 L590.5,503.1 L592.0,505.8 L593.6,508.7 L595.7,515.8 L597.8,521.0 L599.4,520.1 L601.1,517.9 L602.7,514.9 L604.4,511.6 L606.0,508.7 L607.6,506.0 L609.1,503.1 L610.7,500.4 L612.3,498.3 L614.0,496.4 L615.7,494.4 L617.5,492.7 L619.2,491.3 L620.9,490.3 L622.6,490.0 L624.1,490.3 L625.7,491.2 L627.2,492.6 L628.8,494.2 L630.3,498.1 L631.9,504.4 L633.5,510.2 L635.0,512.8 L636.7,512.3 L638.3,511.0 L640.0,509.2 L641.6,506.9 L643.3,504.5 L645.0,501.3 L646.6,496.8 L648.3,491.7 L649.9,486.5 L651.6,481.8 L653.3,476.9 L655.1,471.4 L656.8,466.0 L658.5,461.4 L660.3,458.1 L662.0,456.9 L663.6,458.8 L665.3,463.7 L666.9,470.3 L668.6,477.5 L670.2,483.8 L671.9,490.1 L673.5,497.2 L675.2,504.0 L676.8,509.5 L678.5,512.8 L680.0,514.4 L681.6,515.8 L683.2,516.7 L684.7,517.0 L686.3,514.3 L687.9,507.7 L689.4,499.5 L691.0,492.0 L692.7,483.5 L694.3,474.9 L696.0,470.9 L697.8,475.9 L699.5,484.0 L701.3,490.7 L703.2,497.2 L705.0,502.0 L706.5,504.8 L708.0,507.0 L709.5,508.5 L711.0,509.3 L712.5,509.7 L714.0,510.2 L715.5,511.0 L717.1,513.5 L718.6,517.5 L720.2,521.3 L721.8,523.0 L724.0,517.2 L726.1,506.3 L727.9,495.2 L729.7,481.4 L731.4,468.5 L733.2,460.2 L735.0,456.7 L736.5,457.6 L738.1,460.2 L739.6,463.8 L741.7,479.5 L743.8,499.2 L745.6,511.2 L747.3,522.6 L749.1,531.3 L750.9,534.7 L752.7,534.4 L754.5,533.7 L756.2,532.5 L758.0,531.0 L759.8,526.4 L761.5,517.2 L763.3,505.1 L765.1,492.1 L766.9,472.4 L768.6,449.1 L770.4,437.2 L772.2,436.2 L773.9,435.6 L775.7,435.4 L777.5,442.5 L779.2,459.3 L781.0,479.3 L782.8,495.7 L784.6,508.4 L786.3,520.7 L788.1,531.1 L789.9,538.2 L791.7,543.0 L793.5,545.3 L795.3,539.4 L797.0,524.5 L798.8,504.8 L800.5,484.3 L802.3,467.3 L804.1,451.6 L805.9,434.7 L807.6,419.2 L809.4,407.9 L811.2,403.5 L813.0,409.6 L814.7,423.5 L816.5,439.0 L818.3,458.0 L820.0,479.4 L821.8,492.1 L823.6,496.3 L825.3,499.4 L827.1,501.5 L828.9,502.8 L830.7,503.6 L832.5,504.3 L834.3,504.5 L835.8,490.2 L837.4,461.4 L838.9,439.0 L841.7,423.0 L843.3,425.1 L844.9,430.0 L847.7,453.0 L849.5,453.0 L851.3,453.9 L853.0,456.1 L854.8,458.4 L856.6,460.8 L858.3,463.3 L860.1,465.5 L861.9,467.3 L863.7,469.1 L865.4,470.4 L867.2,470.9 L869.0,469.4 L870.8,465.6 L872.6,460.2 L874.4,446.7 L876.1,426.4 L877.9,412.3 L879.6,406.2 L881.4,403.5 L883.9,412.3 L885.5,418.8 L887.1,425.7 L888.7,432.7 L890.3,439.0 L892.1,446.0 L893.8,453.0 L895.6,458.8 L897.4,462.0 L899.2,463.4 L901.0,464.5 L902.7,465.2 L904.5,465.5 L906.6,461.1 L908.7,456.7 L910.9,474.4 L912.6,477.0 L914.4,478.0 L916.1,468.9 L917.9,456.7 L920.0,449.4 L922.2,446.0 L924.0,460.2 L925.7,481.5 L927.5,495.7 L929.3,508.1 L931.1,517.0 L932.9,523.3 L934.6,529.1 L936.4,533.8 L938.1,537.0 L939.9,538.2 L941.7,537.2 L943.5,534.7 L945.3,522.3 L947.0,497.2 L948.8,468.7 L950.6,446.0 L952.4,428.0 L954.1,412.1 L955.9,405.2 L957.6,405.2 L959.4,405.2 L961.2,415.4 L963.0,437.1 L964.8,456.7 L966.6,470.8 L968.3,483.6 L970.1,492.1 L971.9,497.3 L973.6,501.2 L975.4,502.8 L977.2,502.4 L978.9,501.1 L980.7,499.2 L982.5,484.2 L984.2,458.0 L986.0,442.5 L987.5,440.2 L989.1,438.7 L990.6,438.2 L992.8,455.0 L994.9,474.4 L996.5,477.8 L998.1,480.1 L999.7,481.8 L1001.3,483.3 L1003.1,484.8 L1004.8,485.9 L1006.6,487.1 L1008.4,488.6 L1010.2,491.6 L1012.0,495.7 L1013.7,499.4 L1015.5,501.0 L1017.2,484.3 L1019.0,460.2 L1020.8,445.3 L1022.5,431.6 L1024.3,421.2 L1026.1,415.9 L1027.9,414.0 L1029.6,412.8 L1031.4,412.3 L1033.2,428.1 L1035.0,449.6 L1036.8,458.9 L1038.5,466.0 L1040.3,472.6 L1042.1,480.2 L1043.8,487.4 L1045.6,492.1 L1047.4,494.7 L1049.1,496.6 L1050.9,497.4 L1052.7,496.9 L1054.5,495.7 L1056.3,479.5 L1058.0,448.6 L1059.8,424.8 L1061.3,413.9 L1062.8,404.2 L1064.3,397.2 L1065.8,394.6 L1067.3,396.5 L1068.9,401.1 L1070.4,407.0 L1072.2,419.5 L1073.9,436.7 L1075.7,449.6 L1077.5,456.4 L1079.3,461.5 L1081.1,465.5 L1082.8,468.1 L1084.6,470.9 L1086.1,477.8 L1087.6,488.6 L1089.1,498.5 L1090.6,502.8 L1092.1,486.6 L1093.7,453.1 L1095.2,424.8 L1097.0,403.3 L1098.8,383.3 L1100.5,368.5 L1102.3,362.7 L1104.1,366.1 L1105.9,373.3 L1107.7,385.6 L1109.5,404.2 L1111.2,424.7 L1113.0,442.5 L1114.8,457.7 L1116.5,472.4 L1118.3,485.4 L1120.1,495.7 L1121.9,504.3 L1123.7,512.3 L1125.4,518.2 L1127.2,520.5 L1129.0,506.2 L1130.7,475.3 L1132.5,446.0 L1134.3,419.9 L1136.0,395.1 L1137.8,384.0 L1139.9,384.0 L1142.1,386.5 L1144.2,392.8 L1146.0,410.8 L1147.7,440.5 L1149.5,463.8 L1151.3,476.5 L1153.0,486.9 L1154.8,495.5 L1156.6,502.8 L1158.4,510.0 L1160.2,516.8 L1161.9,522.0 L1163.7,524.0 L1165.5,506.4 L1167.2,478.0 L1169.0,452.0 L1170.8,427.1 L1172.6,415.9 L1174.3,417.6 L1176.1,422.3 L1177.8,429.1 L1179.6,437.2 L1181.4,452.9 L1183.2,470.9 L1185.0,484.0 L1186.7,495.5 L1188.5,502.8 L1190.3,506.4 L1192.0,509.0 L1193.8,511.2 L1195.6,513.4 L1197.4,516.3 L1199.1,519.2 L1200.9,520.5 L1202.7,512.5 L1204.5,504.5 L1207.3,509.9 L1209.8,495.7 L1211.5,495.7 L1213.3,495.7 L1215.1,485.0 L1216.9,474.4 L1218.7,486.6 L1220.4,502.8 L1222.2,510.0 L1223.9,515.4 L1225.7,518.7 L1227.5,520.8 L1229.2,522.4 L1231.0,523.6 L1232.8,524.0 L1234.6,523.5 L1236.4,522.3 L1238.2,512.1 L1239.9,493.7 L1241.7,481.5 L1243.2,478.0 L1244.7,475.2 L1246.2,473.3 L1247.7,472.6 L1249.5,477.0 L1251.3,485.0 L1252.9,493.6 L1254.5,504.2 L1256.1,513.2 L1257.7,517.0 L1259.3,517.0 L1260.8,517.0 L1262.4,517.0 L1264.0,517.0 L1266.5,509.9 L1268.3,512.6 L1270.0,517.8 L1271.8,520.5 L1273.6,515.0 L1275.4,504.7 L1277.2,499.2 L1279.0,502.8 L1280.7,506.3 L1282.8,488.6 L1285.3,509.9 L1287.8,492.1 L1289.3,494.7 L1290.9,499.7 L1292.4,502.8 L1294.2,503.4 L1296.0,503.7 L1297.7,504.0 L1299.5,504.5 L1301.3,506.0 L1303.0,508.4 L1304.8,510.6 L1306.6,511.6 L1308.4,511.2 L1310.1,510.0 L1311.9,508.1 L1313.7,497.0 L1315.5,483.3 L1317.2,477.3 L1319.0,472.6 L1320.8,467.3 L1322.5,462.4 L1324.3,460.2 L1326.8,460.2 L1328.3,463.8 L1329.9,472.1 L1331.4,481.5 L1332.9,493.2 L1334.4,507.9 L1335.9,520.5 L1337.4,525.8 L1339.0,525.5 L1340.7,524.6 L1342.3,523.1 L1344.0,521.1 L1345.6,518.7 L1347.3,512.8 L1349.1,502.8 L1350.9,484.1 L1352.7,458.9 L1354.5,439.0 L1356.3,427.5 L1358.0,418.4 L1359.8,410.6 L1361.5,402.6 L1363.3,398.2 L1365.8,414.1 L1367.3,428.5 L1368.9,445.3 L1370.4,460.2 L1372.2,473.7 L1373.9,485.5 L1375.7,495.7 L1377.5,506.0 L1379.3,511.6 L1381.1,511.0 L1382.8,509.1 L1384.6,506.3 L1386.4,492.1 L1388.1,465.1 L1389.9,439.0 L1391.7,415.8 L1393.4,393.3 L1395.2,378.7 L1397.0,370.8 L1398.8,365.0 L1400.6,362.7 L1402.3,369.1 L1404.1,382.2 L1405.9,402.4 L1407.6,428.7 L1409.4,449.6 L1411.2,462.6 L1413.0,473.0 L1414.8,481.5 L1416.5,489.1 L1418.2,496.4 L1419.8,501.8 L1421.5,504.0 L1423.2,494.7 L1424.9,473.2 L1426.6,449.6 L1428.4,419.8 L1430.1,386.6 L1431.9,368.0 L1434.8,362.7 L1436.9,369.1 L1439.0,382.2 L1440.8,398.6 L1442.5,420.1 L1444.3,439.0 L1446.1,453.4 L1447.8,466.2 L1449.6,477.9 L1451.4,488.6 L1453.2,500.0 L1454.9,510.6 L1456.7,515.2 L1458.5,502.6 L1460.2,474.7 L1462.0,446.0 L1463.8,416.5 L1465.6,386.0 L1467.4,368.0 L1469.2,361.7 L1470.9,359.1 L1472.7,368.7 L1474.5,385.7 L1476.1,399.7 L1477.7,414.9 L1479.3,430.6 L1480.9,446.0" fill="none" stroke="#8085e9" stroke-width="3" stroke-linejoin="round" stroke-linecap="round"/>
  <!-- markers -->
  <circle cx="709.5" cy="508.5" r="10" fill="#8085e9" fill-opacity=".25"/>
  <path d="M709.5 503l5.5 9.5h-11z" fill="#8085e9"/>
  <circle cx="709.5" cy="579.5" r="10" fill="#f7a35c" fill-opacity=".25"/>
  <rect x="704" y="574" width="11" height="11" fill="#f7a35c"/>
  <!-- tooltip -->
  <rect x="577.5" y="436.5" width="118" height="164" fill="#f7f7f7" fill-opacity=".85" stroke="#90ed7d" stroke-width="1"/>
  <g font-size="13.6" fill="#333">
    <circle cx="589.5" cy="453.5" r="3.5" fill="#8085e9"/><text x="595" y="458.5" font-weight="bold" letter-spacing="0.1">Temperatura</text>
    <text x="585" y="474.5" letter-spacing="0.9">10/04/2019</text>
    <text x="585" y="490.5"><tspan font-weight="bold" letter-spacing="1.4">9,4700</tspan><tspan dx="2">°C</tspan></text>
    <circle cx="589.5" cy="501.5" r="3.5" fill="#f7a35c"/><text x="595" y="506.5" font-weight="bold">Radiación</text>
    <text x="585" y="522.5" letter-spacing="0.9">10/04/2019</text>
    <text x="585" y="538.5"><tspan font-weight="bold" letter-spacing="1.4">0,5000</tspan><tspan dx="2">W/m2</tspan></text>
    <circle cx="589.5" cy="549.5" r="3.5" fill="#90ed7d"/><text x="595" y="554.5" font-weight="bold">Producción FV</text>
    <text x="585" y="570.5" letter-spacing="0.9">10/04/2019</text>
    <text x="585" y="586.5"><tspan font-weight="bold" letter-spacing="1.4">0,0100</tspan><tspan dx="2">kWh</tspan></text>
  </g>
  <!-- cursor -->
  <path d="M735.5 479.5v13l3-3 2 4.5 2-1-2-4.3h4.3z" fill="#111" stroke="#fff" stroke-width="1"/>
  <!-- legend -->
  <g font-size="13" font-weight="bold">
    <path d="M698 658.5h16" stroke="#ccc" stroke-width="2"/><circle cx="706" cy="658.5" r="4" fill="#ccc"/>
    <text x="721" y="663" fill="#ccc">Demanda</text>
    <path d="M802 658.5h16" stroke="#90ed7d" stroke-width="2"/><path d="M810 654.5l4 4-4 4-4-4z" fill="#90ed7d"/>
    <text x="825" y="663" fill="#333">Producción FV</text>
    <path d="M936 658.5h16" stroke="#f7a35c" stroke-width="2"/><rect x="940" y="654.5" width="8" height="8" fill="#f7a35c"/>
    <text x="959" y="663" fill="#333">Radiación</text>
    <path d="M1041 658.5h16" stroke="#8085e9" stroke-width="2"/><path d="M1049 654l4.5 8h-9z" fill="#8085e9"/>
    <text x="1064.5" y="663" fill="#333" letter-spacing="0.35">Temperatura</text>
  </g>
  <text x="1575" y="685" font-size="10" fill="#999" text-anchor="end">Highcharts.com</text>
  <path d="M262 767.5H1575" stroke="#eeeeee" stroke-width="1"/>
</svg>
<div class="bg" style="left:1350px;top:712px;width:229px;height:35px;box-shadow:0 1px 2px rgba(0,0,0,.2)"></div>
<svg class="a" style="left:1361px;top:722px" width="14" height="14">
  <circle cx="6" cy="6" r="4.3" stroke="#fff" stroke-width="1.8" fill="none"/>
  <path d="M9 9l3.5 3.5" stroke="#fff" stroke-width="2.2" stroke-linecap="round"/>
  <path d="M6 4v4M4 6h4" stroke="#fff" stroke-width="1.3"/>
</svg>
<div class="t" style="left:1377px;top:724px;font-size:11.3px;font-weight:bold;color:#fff">SEPARAR UNIDADES AGRUPADAS</div>

<div class="a" id="side"></div>
<div class="a" style="left:0;top:330px;width:212px;height:47px;background:#434a55"></div>
<!-- logo -->
<div class="a" style="left:45px;top:115.5px;width:133px;height:96px;background:#fff;border-radius:14px;border:1px solid #e6e6e6"></div>
<svg class="a" style="left:0;top:0" width="212" height="220">
  <rect x="117.3" y="122.7" width="2.6" height="2.6" fill="#4a72c8"/>
  <path d="M113.8 135.5h3.2c1.6 0 2.5 1 2.5 2.5v11c0 2.5 1.3 3.8 3.8 3.8h21" stroke="#24294f" stroke-width="2.6" fill="none"/>
  <path d="M136.8 139.5v34c0 5.5 3 8.5 8.5 8.5h8c9 0 17-4 17-14V142" stroke="#24294f" stroke-width="2.6" fill="none"/>
  <ellipse cx="159.8" cy="151.5" rx="10" ry="9.8" stroke="#24294f" stroke-width="2.6" fill="none"/>
</svg>
<div class="t" style="left:0;width:129px;text-align:right;top:160px;font-size:15px;color:#3a3f5c;letter-spacing:0.5px"><span style="color:#6f8fd8">i</span>nstituto</div>
<div class="t" style="left:0;width:129px;text-align:right;top:175px;font-size:15px;color:#3a3f5c"><span style="color:#6f8fd8">t</span>ecnológico</div>
<div class="t" style="left:0;width:129px;text-align:right;top:190px;font-size:15px;color:#3a3f5c">de <span style="color:#6f8fd8">g</span>alicia</div>
<div class="t" style="left:73px;top:218px;font-size:12px;color:#9aa0a8">agerar@itg.es</div>
<div class="a" style="left:45px;top:223px;width:13px;height:13px;border-radius:50%;background:#2e7d32"></div>
<div class="t" style="left:59px;top:235px;font-size:15px;font-weight:bold;color:#fff">Agerar Energy</div>
<div class="ss" style="top:263px;font-size:12.7px">Monitorización</div>
<div class="si" style="top:301px;font-size:13.5px">Cuadro de mando</div>
<div class="si" style="top:348px;font-size:13.1px">Gráficos</div>
<div class="ss" style="top:384px">Geo Info.</div>
<div class="si" style="top:424px;font-size:12.3px">GIS</div>
<div class="si" style="top:471px">Sinóptico</div>
<div class="ss" style="top:505px">Mantenimiento</div>
<div class="si" style="top:543px;font-size:13.7px">Informes</div>
<div class="si" style="top:590px">Alertas</div>
<div class="ss" style="top:626px">Infraestructura</div>
<div class="si" style="top:666px">Dispositivos</div>
<div class="si" style="top:713px;font-size:13.6px">Propiedades virtuales</div>
<div class="ss" style="top:747px">Administración</div>
<div class="si" style="top:785.5px">Administrador</div>
<svg class="a" style="left:0;top:290px" width="212" height="500">
  <!-- dashboard -->
  <path d="M18 22a8.5 8.5 0 0 1 17 0z" fill="#fff"/>
  <circle cx="21" cy="18" r="1" fill="#4d5561"/><circle cx="26.5" cy="15" r="1" fill="#4d5561"/><circle cx="32" cy="18" r="1" fill="#4d5561"/>
  <path d="M26.5 21l1.5-5" stroke="#4d5561" stroke-width="1.5"/>
  <!-- chart -->
  <path d="M18.5 55v13.5h17" stroke="#fff" stroke-width="1.8" fill="none"/>
  <path d="M20.5 65l4.5-5 3.5 3 5-6" stroke="#fff" stroke-width="2" fill="none"/>
  <path d="M35 55.5v5h-5z" fill="#fff"/>
  <!-- pin -->
  <path d="M22.5 144c-3-4.5-5-7-5-10a5 5 0 0 1 10 0c0 3-2 5.5-5 10z" fill="#fff"/>
  <circle cx="22.5" cy="134" r="1.8" fill="#4d5561"/>
  <!-- map -->
  <path d="M18 190v-12.5l5-2 5 2 5.5-2v13l-5.5 2-5-2z" fill="#fff"/>
  <path d="M23 176v13.5M28 178v13.5" stroke="#4d5561" stroke-width=".9"/>
  <!-- table -->
  <rect x="18" y="251" width="14.5" height="12" fill="#fff"/>
  <path d="M18 254.5h14.5M18 257.3h14.5M18 260.1h14.5M22.5 254v9M27.3 254v9" stroke="#4d5561" stroke-width=".9"/>
  <!-- bell -->
  <path d="M19 308.5c1.5-1.2 2.2-2.5 2.2-6 0-3.2 2-5 4.8-5s4.8 1.8 4.8 5c0 3.5.7 4.8 2.2 6z" fill="#fff"/>
  <circle cx="26" cy="310" r="1.7" fill="#fff"/>
  <path d="M181.5 302.5l3 3-3 3" stroke="#7d8696" stroke-width="1.2" fill="none"/>
  <!-- sitemap -->
  <rect x="23.5" y="375" width="5" height="4" fill="#fff"/>
  <path d="M26 379v3M20.5 385v-3h11v3M26 382v3" stroke="#fff" stroke-width="1.3" fill="none"/>
  <rect x="18" y="384" width="5" height="4" fill="#fff"/><rect x="23.5" y="384" width="5" height="4" fill="#fff"/><rect x="29" y="384" width="5" height="4" fill="#fff"/>
  <!-- calculator -->
  <rect x="19" y="419" width="13" height="15" rx="1" fill="#fff"/>
  <rect x="21" y="421" width="9" height="3" fill="#4d5561"/>
  <path d="M21 426.5h9M21 429h9M21 431.5h9M23.5 425v8M26 425v8M28.5 425v8" stroke="#4d5561" stroke-width=".8"/>
  <!-- users -->
  <circle cx="21" cy="493.5" r="1.9" fill="#fff"/><circle cx="31.5" cy="493.5" r="1.9" fill="#fff"/><circle cx="26.3" cy="494" r="2.2" fill="#fff"/>
  <path d="M18 499.5c0-2.2 1.3-3.6 3.5-3.6h10.5c2.2 0 3.5 1.4 3.5 3.6z" fill="#fff"/>
</svg>
<div class="a" id="sbar"></div>
<svg class="a" style="left:212px;top:97px" width="18" height="692">
  <path d="M5 12l4-4 4 4" stroke="#505050" stroke-width="1.6" fill="none"/>
  <path d="M5 679l4 4 4-4" stroke="#505050" stroke-width="1.6" fill="none"/>
</svg>
<div class="a" id="thumb"></div>
<div class="a" id="footer"></div>
<div class="t" style="left:639px;top:807.5px;font-size:15.7px;color:#444">© 2019 Agerar.</div>
<svg class="a" style="left:1320px;top:795px" width="220" height="42" font-family="Liberation Sans">
  <ellipse cx="14" cy="13" rx="9.5" ry="6.5" fill="#2e8b3a"/>
  <path d="M14 6.5a9.5 6.5 0 0 1 0 13z" fill="#d32f2f"/>
  <circle cx="14" cy="13" r="3" fill="#f5c400"/>
  <text x="30.5" y="19" font-size="17" font-weight="bold" fill="#1f4ea8" letter-spacing="1.1">Interreg</text>
  <text x="31" y="28" font-size="8" font-weight="bold" fill="#3a6cc8">España - Portugal</text>
  <path d="M31 32h50M31 34h55" stroke="#9ab0d8" stroke-width=".8"/>
  <rect x="109" y="6" width="19" height="13" fill="#1f3f9a"/>
  <circle cx="118.5" cy="12.5" r="4" fill="none" stroke="#f5d000" stroke-width="1" stroke-dasharray="1 1.1"/>
  <path d="M109 22h19" stroke="#9ab0d8" stroke-width=".8"/>
  <path d="M138 35.5V15.5l6.5-6.5 3.5 3.5 3.5-3.5 9.5 9.5v17z" fill="none" stroke="#f5d000" stroke-width="2"/>
  <path d="M142.5 32V18l6.5-6.5 6.5 6.5v14z" fill="none" stroke="#f5d000" stroke-width="1.6"/>
  <text x="167" y="26" font-size="11.5" font-weight="bold" fill="#f2cc00">AGERAR</text>
</svg>
<div class="a" id="botline"></div>
<div class="a" id="botgray"></div>
</body></html>
